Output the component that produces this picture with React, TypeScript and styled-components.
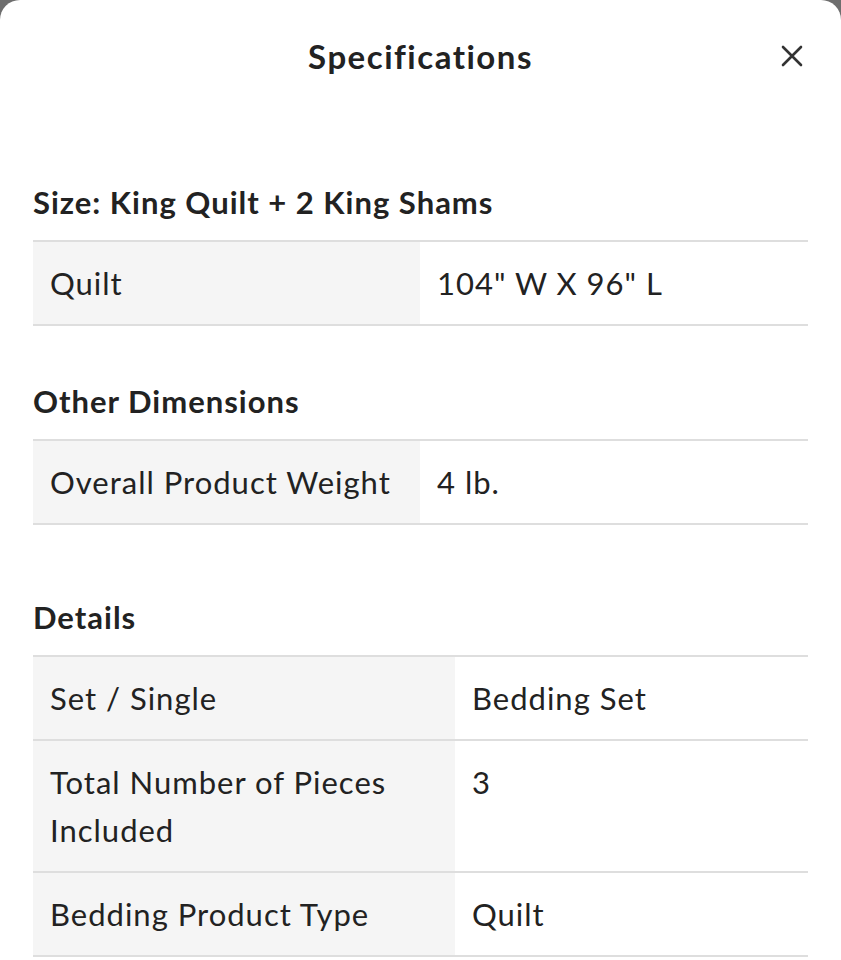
import React from "react";
import styled, { createGlobalStyle } from "styled-components";

const GlobalStyle = createGlobalStyle`
  html, body {
    margin: 0;
    padding: 0;
    background: #6e6e6e;
  }
  body {
    font-family: Lato, "Noto Sans", sans-serif;
    color: #222;
  }
`;

const Sheet = styled.div`
  background: #fff;
  min-height: 960px;
  border-radius: 20px 20px 0 0;
  padding: 0 33px;
  box-sizing: border-box;
`;

const Header = styled.div`
  height: 112px;
  display: grid;
  grid-template-columns: 1fr auto 1fr;
  align-items: center;
`;

const Title = styled.h1`
  grid-column: 2;
  margin: 0;
  font-size: 33px;
  line-height: 40px;
  font-weight: 700;
  letter-spacing: 1.5px;
`;

const CloseButton = styled.button`
  grid-column: 3;
  justify-self: end;
  margin-right: 4px;
  width: 24px;
  height: 24px;
  padding: 0;
  border: 0;
  background: none;
  display: flex;
  align-items: center;
  justify-content: center;
  color: #333;
`;

const Section = styled.section<{ $gap: number }>`
  margin-top: ${(p) => p.$gap}px;
`;

const Heading = styled.h2`
  margin: 0 0 18px;
  font-size: 31px;
  line-height: 40px;
  font-weight: 700;
  letter-spacing: 1px;
`;

const Table = styled.div`
  border-top: 2px solid #dedede;
`;

const Row = styled.div<{ $label: string }>`
  display: grid;
  grid-template-columns: ${(p) => p.$label} 1fr;
  border-bottom: 2px solid #dedede;
`;

const Cell = styled.div<{ $shade?: boolean }>`
  padding: 17px 17px;
  font-size: 31px;
  line-height: 48px;
  letter-spacing: 1px;
  background: ${(p) => (p.$shade ? "#f5f5f5" : "#fff")};
`;

type Spec = [string, string];

const sections: { title: string; gap: number; label: string; rows: Spec[] }[] = [
  {
    title: "Size: King Quilt + 2 King Shams",
    gap: 70,
    label: "387px",
    rows: [["Quilt", "104\" W X 96\" L"]],
  },
  {
    title: "Other Dimensions",
    gap: 55,
    label: "387px",
    rows: [["Overall Product Weight", "4 lb."]],
  },
  {
    title: "Details",
    gap: 72,
    label: "422px",
    rows: [
      ["Set / Single", "Bedding Set"],
      ["Total Number of Pieces Included", "3"],
      ["Bedding Product Type", "Quilt"],
    ],
  },
];

const App: React.FC = () => {
  return (
    <>
      <GlobalStyle />
      <Sheet>
        <Header>
          <Title>Specifications</Title>
          <CloseButton aria-label="Close">
            <svg width="22" height="22" viewBox="0 0 22 22">
              <path
                d="M2 2 L20 20 M20 2 L2 20"
                stroke="currentColor"
                strokeWidth="2.6"
                strokeLinecap="round"
              />
            </svg>
          </CloseButton>
        </Header>
        {sections.map((s) => (
          <Section key={s.title} $gap={s.gap}>
            <Heading>{s.title}</Heading>
            <Table>
              {s.rows.map(([k, v]) => (
                <Row key={k} $label={s.label}>
                  <Cell $shade>{k}</Cell>
                  <Cell>{v}</Cell>
                </Row>
              ))}
            </Table>
          </Section>
        ))}
      </Sheet>
    </>
  );
};

export default App;
